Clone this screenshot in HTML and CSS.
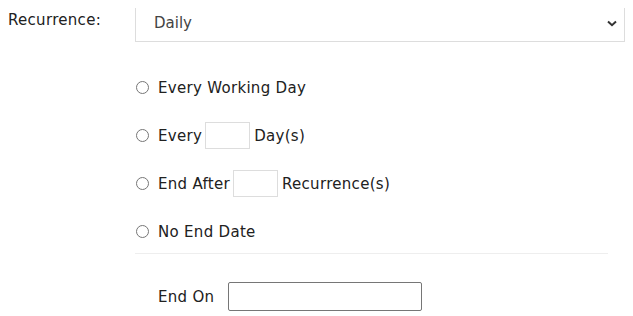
FILE: index.html
```html
<!DOCTYPE html>
<html lang="en">
<head>
  <meta charset="utf-8">
  <title>Recurrence</title>
  <link rel="stylesheet" href="styles.css">
</head>
<body>
  <div class="form-row">
    <label class="form-label" for="recurrence">Recurrence:</label>
    <div class="form-field">
      <div class="select-wrap">
        <select id="recurrence" class="form-select">
          <option>Daily</option>
          <option>Weekly</option>
          <option>Monthly</option>
        </select>
        <svg class="chevron" width="10" height="7" viewBox="0 0 10 7">
          <path d="M1 1.5 L5 5.2 L9 1.5" fill="none" stroke="#333" stroke-width="2"/>
        </svg>
      </div>

      <div class="options">
        <label class="option">
          <input type="radio" name="rec">
          <span>Every Working Day</span>
        </label>
        <label class="option">
          <input type="radio" name="rec">
          <span>Every</span>
          <input type="text" class="small-input">
          <span>Day(s)</span>
        </label>
        <label class="option">
          <input type="radio" name="rec">
          <span>End After</span>
          <input type="text" class="small-input">
          <span>Recurrence(s)</span>
        </label>
        <label class="option">
          <input type="radio" name="rec">
          <span>No End Date</span>
        </label>

        <div class="end-on">
          <span>End On</span>
          <input type="text" class="date-input">
        </div>
      </div>
    </div>
  </div>
</body>
</html>
```

FILE: styles.css
```css
* {
    box-sizing: border-box;
}
body {
    margin: 8px;
    font-family: "DejaVu Sans", sans-serif;
    font-size: 15px;
    letter-spacing: 0.3px;
    color: #212121;
    background: #fff;
}

.form-row {
    display: grid;
    grid-template-columns: 127px 1fr;
}
.form-label {
    padding-top: 3px;
}

.select-wrap {
    position: relative;
    margin-top: -4px;
}
.form-select {
    width: 100%;
    height: 38px;
    padding: 0 18px;
    border: 1px solid #dddddd;
    border-radius: 0;
    background: #fff;
    font: inherit;
    color: #444;
    -webkit-appearance: none;
    appearance: none;
    outline: none;
}
.chevron {
    position: absolute;
    right: 8px;
    top: 16px;
    pointer-events: none;
}

.options {
    width: 473px;
    margin-top: 32px;
}
.option {
    display: flex;
    align-items: center;
    height: 27px;
    margin-bottom: 21px;
    cursor: pointer;
}
.option input[type="radio"] {
    width: 13px;
    height: 13px;
    margin: 0 9px 0 1px;
}
.small-input {
    width: 45px;
    height: 27px;
    margin: 0 4px 0 3px;
    border: 1px solid #dddddd;
    font: inherit;
}

.end-on {
    display: flex;
    align-items: center;
    border-top: 1px solid #eeeeee;
    margin-top: -13px;
    padding: 28px 0 0 23px;
}
.date-input {
    width: 194px;
    height: 29px;
    margin-left: 14px;
    border: 1px solid #767676;
    border-radius: 2px;
    font: inherit;
}
```
